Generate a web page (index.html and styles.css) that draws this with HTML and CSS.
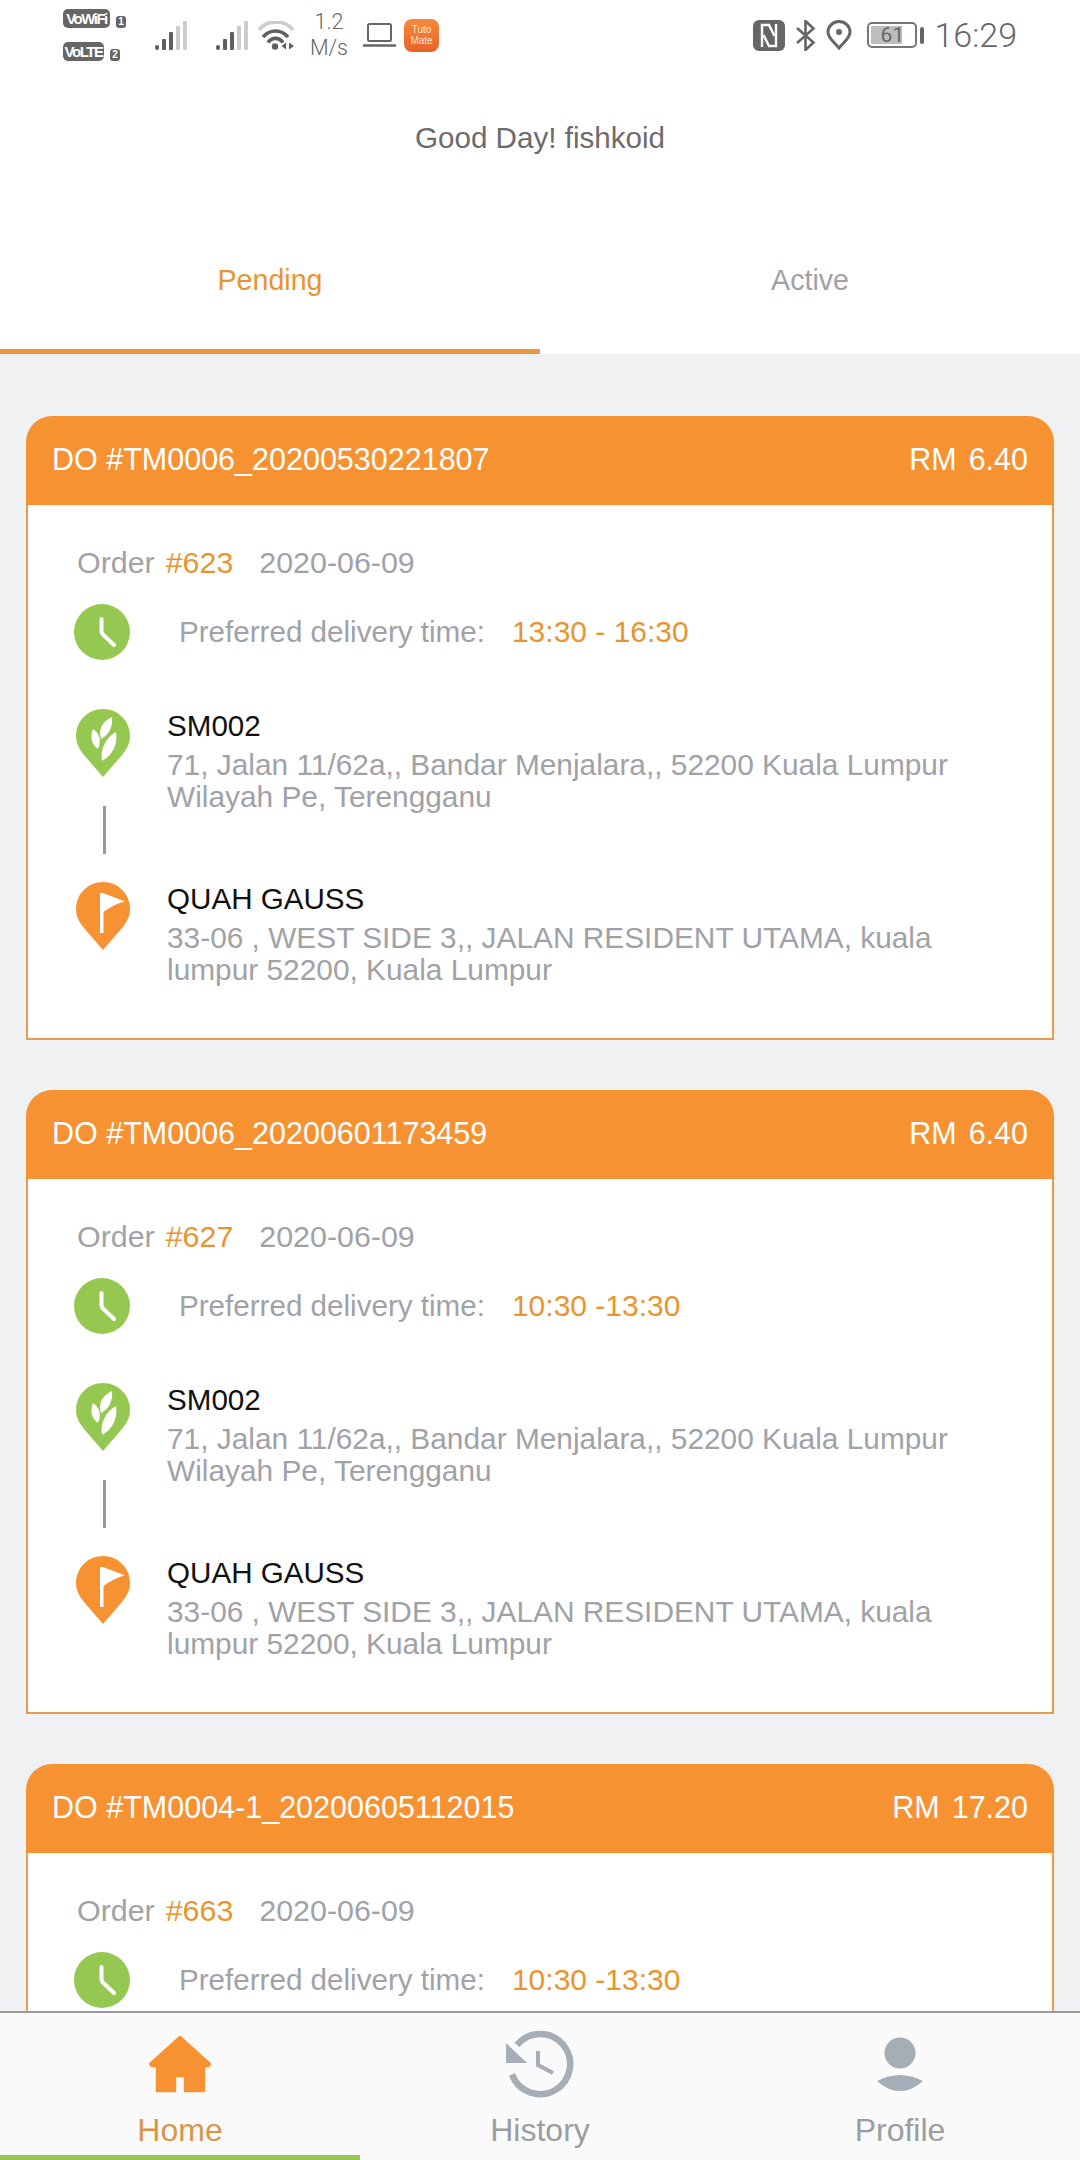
FILE: index.html
```html
<!DOCTYPE html>
<html lang="en">
<head>
    <meta charset="UTF-8" />
    <title>Delivery orders</title>
    <link rel="stylesheet" href="styles.css">
</head>
<body>
<section class="screen">
    <!-- status bar -->
    <header class="status">
        <div class="status-left">
            <div class="sims">
                <div class="sim-row"><span class="badge badge-wifi">VoWiFi</span><span class="sim-no">1</span></div>
                <div class="sim-row"><span class="badge badge-lte">VoLTE</span><span class="sim-no">2</span></div>
            </div>
            <svg class="signal" viewBox="0 0 32 30"><rect x="0" y="25" width="4" height="5" rx="2" fill="#5f5f5f"/><rect x="7" y="19" width="4" height="11" rx="1" fill="#5f5f5f"/><rect x="14" y="12" width="4" height="18" rx="1" fill="#5f5f5f"/><rect x="21" y="6" width="4" height="24" rx="1" fill="#ccc"/><rect x="28" y="1" width="4" height="29" rx="1" fill="#ccc"/></svg>
            <svg class="signal" viewBox="0 0 32 30"><rect x="0" y="25" width="4" height="5" rx="2" fill="#5f5f5f"/><rect x="7" y="19" width="4" height="11" rx="1" fill="#5f5f5f"/><rect x="14" y="12" width="4" height="18" rx="1" fill="#5f5f5f"/><rect x="21" y="6" width="4" height="24" rx="1" fill="#ccc"/><rect x="28" y="1" width="4" height="29" rx="1" fill="#ccc"/></svg>
            <svg class="wifi" viewBox="0 0 37 29" fill="none"><path d="M1 9C9 -1.7 27 -1.7 35 9" stroke="#ccc" stroke-width="3.6"/><path d="M5 16C12 8 23 8 30 16" stroke="#5f5f5f" stroke-width="3.6"/><path d="M10 21.5C14 16 21 16 25 21.5" stroke="#5f5f5f" stroke-width="3.6"/><circle cx="17" cy="25.5" r="3.2" fill="#5f5f5f"/><path d="M28 21.5V28.5L23.5 25Z M31 21.5V28.5L36 25Z" fill="#5f5f5f"/></svg>
            <div class="speed"><span>1.2</span><span>M/s</span></div>
            <svg class="laptop" viewBox="0 0 33 24" fill="none" stroke="#666"><rect x="5" y="1" width="23" height="17" rx="1.5" stroke-width="2"/><path d="M0 22.5H33" stroke-width="2.4"/></svg>
            <div class="app-icon"><span>Tuto</span><span>Mate</span></div>
        </div>
        <div class="status-right">
            <svg class="nfc" viewBox="0 0 32 31"><rect width="32" height="31" rx="6" fill="#666"/><path d="M9 27V5H16L21.5 16M23 4V26H16L10.5 15" fill="none" stroke="#fff" stroke-width="2.4"/></svg>
            <svg class="bt" viewBox="0 0 21 31" fill="none" stroke="#666" stroke-width="2.6"><path d="M2 8L18.5 22.5L10.5 30V1L18.5 8.5L2 23"/></svg>
            <svg class="loc" viewBox="0 0 26 30" fill="none"><path d="M13 28C8 22 2 18 2 12A11 10.5 0 0 1 24 12C24 18 18 22 13 28Z" stroke="#666" stroke-width="3"/><circle cx="13" cy="12" r="3" fill="#666"/></svg>
            <div class="battery">61</div>
            <span class="battery-tip"></span>
            <span class="clock-text">16:29</span>
        </div>
    </header>

    <p class="greeting">Good Day! fishkoid</p>

    <nav class="tabs">
        <div class="tab tab-active">Pending</div>
        <div class="tab">Active</div>
    </nav>

    <main class="list">
        <article class="card">
            <div class="card-head"><span>DO #TM0006_20200530221807</span><span class="price"><span>RM</span><span>6.40</span></span></div>
            <div class="card-body">
                <div class="meta"><span>Order</span><span class="order-no">#623</span><span class="order-date">2020-06-09</span></div>
                <div class="time-row">
                    <svg class="time-icon" viewBox="0 0 56 56"><circle cx="28" cy="28" r="28" fill="#95c851"/><path d="M27.5 15V27Q27.5 29 29 30.5L40 41" fill="none" stroke="#fff" stroke-width="4" stroke-linecap="round"/></svg>
                    <span class="time-label">Preferred delivery time:</span>
                    <span class="time-value">13:30 - 16:30</span>
                </div>
                <div class="stop">
                    <div class="stop-icons">
                        <svg class="pin" viewBox="0 0 54 68"><path d="M27 0C12 0 0 12 0 27C0 35 4 41 8 46L27 68L46 46C50 41 54 35 54 27C54 12 42 0 27 0Z" fill="#95c851"/><path d="M25 30C22 20 27 12 36 8C37 18 33 26 25 30ZM22 40C15 35 14 27 17 20C23 24 26 31 22 40ZM26 52C24 40 30 28 40 23C42 35 37 46 26 52Z" fill="#fff"/></svg>
                        <span class="stem"></span>
                    </div>
                    <div class="stop-text">
                        <div class="stop-name">SM002</div>
                        <div class="stop-addr">71, Jalan 11/62a,, Bandar Menjalara,, 52200 Kuala Lumpur Wilayah Pe, Terengganu</div>
                    </div>
                </div>
                <div class="stop stop-end">
                    <div class="stop-icons">
                        <svg class="pin" viewBox="0 0 54 68"><path d="M27 0C12 0 0 12 0 27C0 35 4 41 8 46L27 68L46 46C50 41 54 35 54 27C54 12 42 0 27 0Z" fill="#f79233"/><path d="M24 11H27L49 19.5Q38 22 27.5 30V51H24Z" fill="#fff"/></svg>
                    </div>
                    <div class="stop-text">
                        <div class="stop-name">QUAH GAUSS</div>
                        <div class="stop-addr">33-06 , WEST SIDE 3,, JALAN RESIDENT UTAMA, kuala lumpur 52200, Kuala Lumpur</div>
                    </div>
                </div>
            </div>
        </article>

        <article class="card">
            <div class="card-head"><span>DO #TM0006_20200601173459</span><span class="price"><span>RM</span><span>6.40</span></span></div>
            <div class="card-body">
                <div class="meta"><span>Order</span><span class="order-no">#627</span><span class="order-date">2020-06-09</span></div>
                <div class="time-row">
                    <svg class="time-icon" viewBox="0 0 56 56"><circle cx="28" cy="28" r="28" fill="#95c851"/><path d="M27.5 15V27Q27.5 29 29 30.5L40 41" fill="none" stroke="#fff" stroke-width="4" stroke-linecap="round"/></svg>
                    <span class="time-label">Preferred delivery time:</span>
                    <span class="time-value">10:30 -13:30</span>
                </div>
                <div class="stop">
                    <div class="stop-icons">
                        <svg class="pin" viewBox="0 0 54 68"><path d="M27 0C12 0 0 12 0 27C0 35 4 41 8 46L27 68L46 46C50 41 54 35 54 27C54 12 42 0 27 0Z" fill="#95c851"/><path d="M25 30C22 20 27 12 36 8C37 18 33 26 25 30ZM22 40C15 35 14 27 17 20C23 24 26 31 22 40ZM26 52C24 40 30 28 40 23C42 35 37 46 26 52Z" fill="#fff"/></svg>
                        <span class="stem"></span>
                    </div>
                    <div class="stop-text">
                        <div class="stop-name">SM002</div>
                        <div class="stop-addr">71, Jalan 11/62a,, Bandar Menjalara,, 52200 Kuala Lumpur Wilayah Pe, Terengganu</div>
                    </div>
                </div>
                <div class="stop stop-end">
                    <div class="stop-icons">
                        <svg class="pin" viewBox="0 0 54 68"><path d="M27 0C12 0 0 12 0 27C0 35 4 41 8 46L27 68L46 46C50 41 54 35 54 27C54 12 42 0 27 0Z" fill="#f79233"/><path d="M24 11H27L49 19.5Q38 22 27.5 30V51H24Z" fill="#fff"/></svg>
                    </div>
                    <div class="stop-text">
                        <div class="stop-name">QUAH GAUSS</div>
                        <div class="stop-addr">33-06 , WEST SIDE 3,, JALAN RESIDENT UTAMA, kuala lumpur 52200, Kuala Lumpur</div>
                    </div>
                </div>
            </div>
        </article>

        <article class="card">
            <div class="card-head"><span>DO #TM0004-1_20200605112015</span><span class="price"><span>RM</span><span>17.20</span></span></div>
            <div class="card-body">
                <div class="meta"><span>Order</span><span class="order-no">#663</span><span class="order-date">2020-06-09</span></div>
                <div class="time-row">
                    <svg class="time-icon" viewBox="0 0 56 56"><circle cx="28" cy="28" r="28" fill="#95c851"/><path d="M27.5 15V27Q27.5 29 29 30.5L40 41" fill="none" stroke="#fff" stroke-width="4" stroke-linecap="round"/></svg>
                    <span class="time-label">Preferred delivery time:</span>
                    <span class="time-value">10:30 -13:30</span>
                </div>
            </div>
        </article>
    </main>

    <footer class="bottom-nav">
        <div class="nav-item nav-active">
            <svg class="nav-icon" viewBox="0 0 72 72"><path d="M36 9L66 36L64.5 38H60V63H41V48H31V63H13V38H7.5L6 36Z" fill="#f79233" stroke="#f79233" stroke-width="2.4" stroke-linejoin="round"/></svg>
            <span class="nav-label">Home</span>
        </div>
        <div class="nav-item">
            <svg class="nav-icon" viewBox="0 0 72 72"><path d="M8 46.5A30 30 0 1 0 13 17" fill="none" stroke="#a5adb6" stroke-width="6.5"/><path d="M2 15V35H23Z" fill="#a5adb6"/><path d="M34 23V37L49 45" fill="none" stroke="#a5adb6" stroke-width="4"/></svg>
            <span class="nav-label">History</span>
        </div>
        <div class="nav-item">
            <svg class="nav-icon" viewBox="0 0 72 72"><circle cx="36" cy="25" r="15.5" fill="#a5adb6"/><path d="M13 53Q36 41 59 53Q48 63 36 63Q24 63 13 53Z" fill="#a5adb6"/></svg>
            <span class="nav-label">Profile</span>
        </div>
    </footer>
</section>
</body>
</html>
```

FILE: styles.css
```css
* {
    padding: 0;
    margin: 0;
    box-sizing: border-box;
}
:root {
    --orange: #f79233;
    --orange-text: #e8952f;
    --green: #95c851;
    --grey-text: #a0a2a7;
    --status: #666;
}
body {
    width: 1080px;
    height: 2160px;
    background: white;
    font-family: "Liberation Sans", Arial, sans-serif;
}
.screen {
    height: 2160px;
    display: flex;
    flex-direction: column;
    overflow: hidden;
}

/* status bar */
.status {
    height: 70px;
    display: flex;
    justify-content: space-between;
    align-items: center;
    padding: 0 63px;
    color: var(--status);
}
.status-left, .status-right {
    display: flex;
    align-items: center;
}
.sims {
    width: 63px;
    display: flex;
    flex-direction: column;
    gap: 14px;
}
.sim-row {
    display: flex;
    align-items: flex-end;
    gap: 6px;
}
.badge {
    height: 19px;
    line-height: 19px;
    border-radius: 5px;
    background: var(--status);
    color: white;
    font-size: 15px;
    font-weight: bold;
    letter-spacing: -1.5px;
    text-align: center;
}
.badge-wifi {
    width: 47px;
}
.badge-lte {
    width: 41px;
}
.sim-no {
    width: 10px;
    height: 12px;
    line-height: 12px;
    border-radius: 3px;
    background: var(--status);
    color: white;
    font-size: 10px;
    font-weight: bold;
    text-align: center;
}
.signal {
    width: 32px;
    height: 30px;
    margin-left: 29px;
}
.wifi {
    width: 37px;
    height: 29px;
    margin-left: 10px;
}
.speed {
    width: 40px;
    margin-left: 14px;
    display: flex;
    flex-direction: column;
    align-items: center;
    font-family: Roboto, sans-serif;
    font-weight: 300;
    font-size: 21.5px;
    line-height: 26px;
}
.laptop {
    width: 33px;
    height: 24px;
    margin-left: 14px;
}
.app-icon {
    width: 35px;
    height: 33px;
    margin-left: 8px;
    border-radius: 8px;
    background: linear-gradient(#f58a3a, #e8622a);
    color: #ffe6d2;
    font-size: 10px;
    line-height: 11px;
    display: flex;
    flex-direction: column;
    align-items: center;
    justify-content: center;
}
.nfc {
    width: 32px;
    height: 31px;
}
.bt {
    width: 21px;
    height: 31px;
    margin-left: 10px;
}
.loc {
    width: 26px;
    height: 30px;
    margin-left: 10px;
}
.battery {
    width: 50px;
    height: 26px;
    margin-left: 15px;
    padding: 2px;
    border: 2px solid #777;
    border-radius: 5px;
    background: linear-gradient(90deg, #bdbdbd 73%, transparent 73%) content-box;
    font-family: Roboto, sans-serif;
    font-size: 21px;
    line-height: 18px;
    text-align: center;
}
.battery-tip {
    width: 4px;
    height: 17px;
    margin-left: 3px;
    border-radius: 2px;
    background: var(--status);
}
.clock-text {
    margin-left: 10px;
    font-family: Roboto, sans-serif;
    font-weight: 300;
    font-size: 34px;
}

/* greeting and tabs */
.greeting {
    height: 130px;
    padding-top: 48px;
    text-align: center;
    color: #6c6c6c;
    font-size: 29.6px;
    line-height: 40px;
}
.tabs {
    display: flex;
    height: 154px;
}
.tab {
    flex: 1;
    padding-top: 60px;
    text-align: center;
    color: var(--grey-text);
    font-size: 28.6px;
    line-height: 40px;
}
.tab-active {
    color: var(--orange-text);
    border-bottom: 5px solid #ea9542;
}

/* orders */
.list {
    flex: 1;
    min-height: 0;
    overflow: hidden;
    padding: 62px 26px 0;
    display: flex;
    flex-direction: column;
    gap: 50px;
    background: #eff1f3;
}
.card {
    flex-shrink: 0;
}
.card-head {
    height: 89px;
    padding: 0 26px 2px;
    display: flex;
    justify-content: space-between;
    align-items: center;
    border-radius: 26px 26px 0 0;
    background: var(--orange);
    color: white;
    font-size: 30.5px;
}
.price {
    display: flex;
    gap: 12px;
}
.card-body {
    padding: 37px 46px 52px;
    border: 2px solid #e99a4c;
    border-top: 0;
    background: white;
    font-size: 29.85px;
    color: var(--grey-text);
}
.meta {
    display: flex;
    line-height: 40px;
    margin-left: 3px;
    font-size: 30.4px;
}
.order-no {
    margin-left: 11px;
    color: var(--orange-text);
}
.order-date {
    margin-left: 26px;
}
.time-row {
    display: flex;
    align-items: center;
    margin-top: 22px;
}
.time-icon {
    width: 56px;
    height: 56px;
}
.time-label {
    margin-left: 49px;
    font-size: 29.6px;
}
.time-value {
    margin-left: 27px;
    font-size: 30px;
    color: var(--orange-text);
}
.stop {
    display: flex;
    align-items: flex-start;
    margin-top: 49px;
}
.stop-end {
    margin-top: 28px;
}
.stop-icons {
    width: 93px;
    flex-shrink: 0;
    padding-left: 2px;
    display: flex;
    flex-direction: column;
}
.pin {
    width: 54px;
    height: 68px;
}
.stem {
    width: 3px;
    height: 48px;
    margin: 29px 0 0 27px;
    background: #999;
}
.stop-text {
    width: 800px;
}
.stop-name {
    color: #111;
    font-size: 29.6px;
    line-height: 34px;
}
.stop-addr {
    margin-top: 6px;
    line-height: 32px;
}

/* bottom navigation */
.bottom-nav {
    height: 149px;
    flex-shrink: 0;
    display: flex;
    border-top: 2px solid #999;
    background: #fafafa;
}
.nav-item {
    flex: 1;
    padding-top: 15px;
    display: flex;
    flex-direction: column;
    align-items: center;
    color: #9a9da2;
}
.nav-active {
    color: #d9954a;
    border-bottom: 5px solid var(--green);
}
.nav-icon {
    width: 72px;
    height: 72px;
}
.nav-label {
    margin-top: 12px;
    font-size: 32px;
    line-height: 36px;
}
```
